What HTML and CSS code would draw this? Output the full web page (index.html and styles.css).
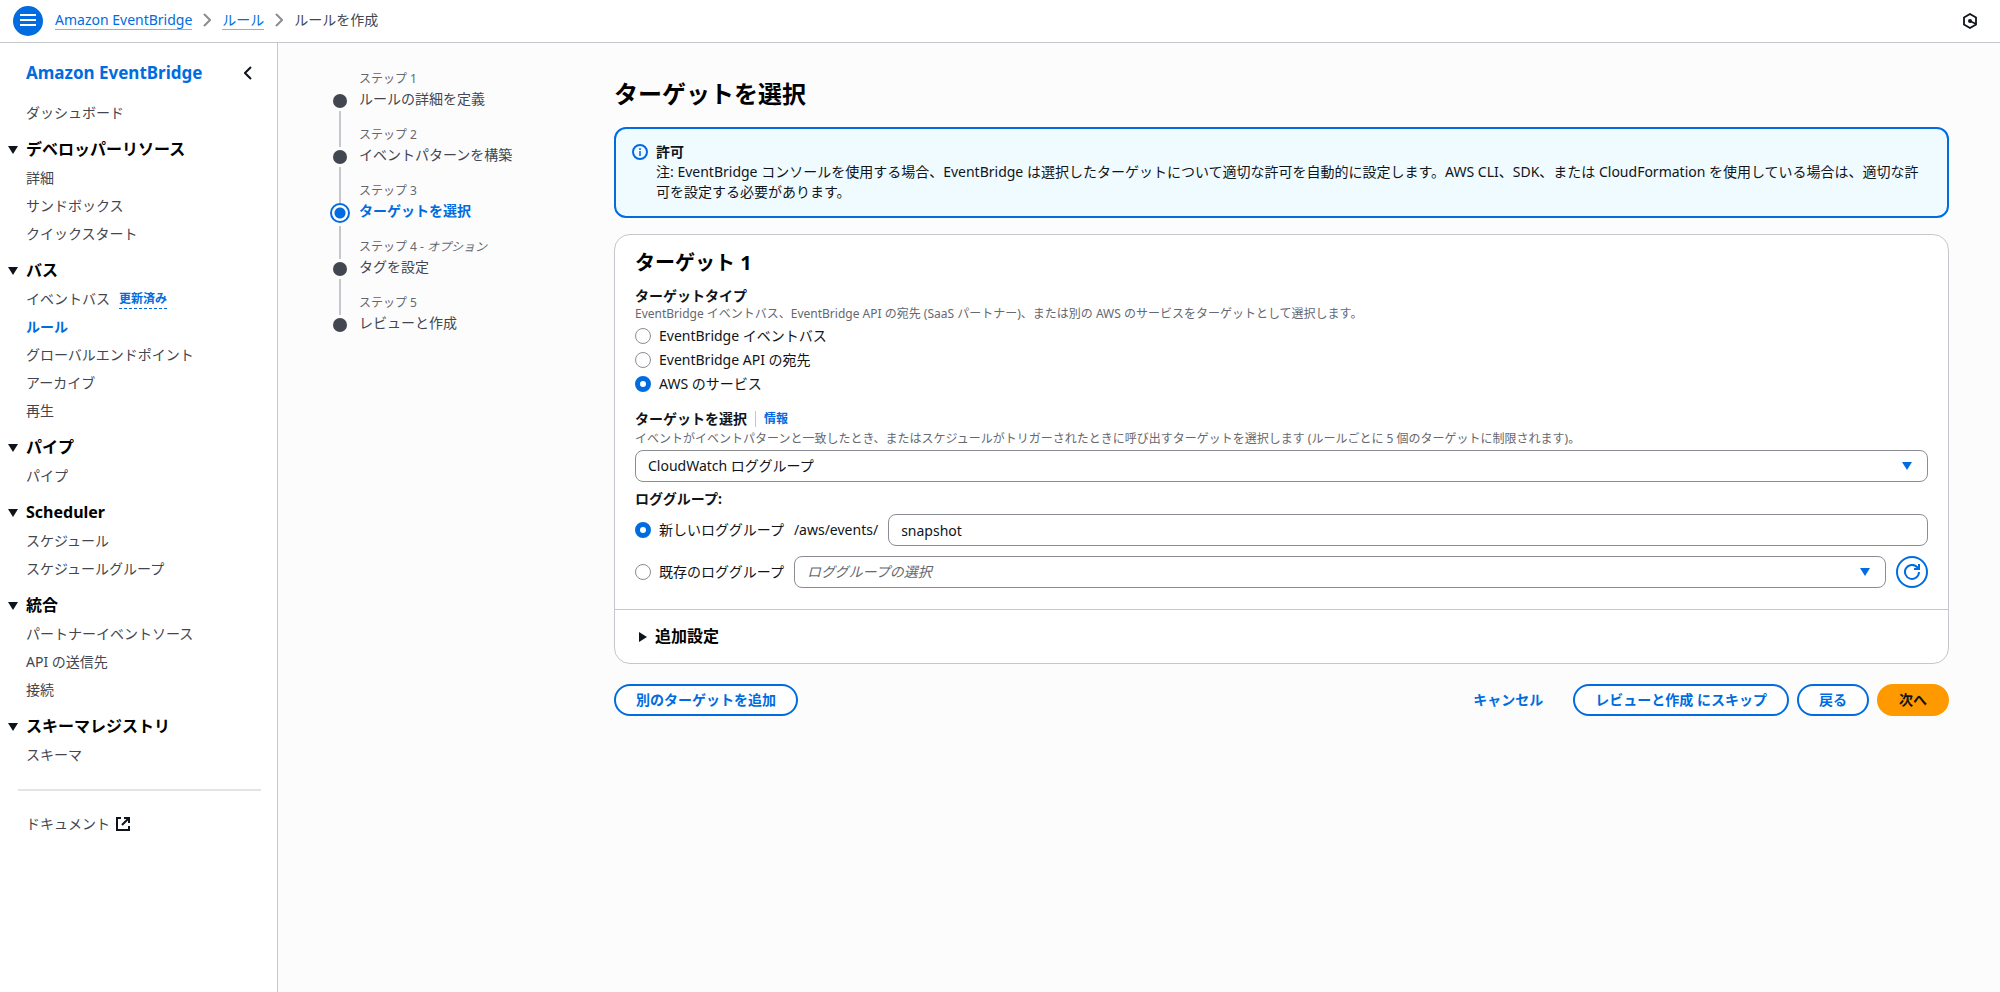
FILE: index.html
```
<!DOCTYPE html>
<html lang="ja">
<head>
    <meta charset="UTF-8">
    <meta name="viewport" content="width=device-width, initial-scale=1.0">
    <title>ルールを作成 | Amazon EventBridge</title>
    <link rel="stylesheet" href="styles.css">
</head>
<body>
    <header class="topbar">
        <button type="button" class="menu-btn" aria-label="メニュー">
            <svg width="16" height="16" viewBox="0 0 16 16" fill="none" stroke="currentColor" stroke-width="2"><path d="M0 2h16M0 7h16M0 12h16"/></svg>
        </button>
        <nav class="breadcrumb">
            <a href="#">Amazon EventBridge</a>
            <svg width="8" height="14" viewBox="0 0 8 14" fill="none" stroke="currentColor" stroke-width="2"><path d="M1 1l6 6-6 6"/></svg>
            <a href="#">ルール</a>
            <svg width="8" height="14" viewBox="0 0 8 14" fill="none" stroke="currentColor" stroke-width="2"><path d="M1 1l6 6-6 6"/></svg>
            <span>ルールを作成</span>
        </nav>
        <button type="button" class="hex-btn" aria-label="ツール">
            <svg width="16" height="16" viewBox="0 0 16 16" fill="none" stroke="currentColor"><path d="M8 1l6 3.500v7L8 15l-6-3.500v-7z" stroke-width="1.800"/><path d="M8 8l6 3" stroke-width="1.500"/><circle cx="8" cy="8" r="2" fill="currentColor" stroke="none"/></svg>
        </button>
    </header>

    <div class="layout">
        <aside class="sidebar">
            <div class="sidebar-head">
                <a href="#">Amazon EventBridge</a>
                <button type="button" class="close-btn" aria-label="閉じる">
                    <svg width="8" height="14" viewBox="0 0 8 14" fill="none" stroke="currentColor" stroke-width="2"><path d="M7 1L1 7l6 6"/></svg>
                </button>
            </div>
            <ul class="nav-list">
                <li><a href="#">ダッシュボード</a></li>
            </ul>
            <details class="nav-group" open>
                <summary>デベロッパーリソース</summary>
                <ul class="nav-list">
                    <li><a href="#">詳細</a></li>
                    <li><a href="#">サンドボックス</a></li>
                    <li><a href="#">クイックスタート</a></li>
                </ul>
            </details>
            <details class="nav-group" open>
                <summary>バス</summary>
                <ul class="nav-list">
                    <li><a href="#">イベントバス</a><button type="button" class="updated">更新済み</button></li>
                    <li><a href="#" class="active">ルール</a></li>
                    <li><a href="#">グローバルエンドポイント</a></li>
                    <li><a href="#">アーカイブ</a></li>
                    <li><a href="#">再生</a></li>
                </ul>
            </details>
            <details class="nav-group" open>
                <summary>パイプ</summary>
                <ul class="nav-list">
                    <li><a href="#">パイプ</a></li>
                </ul>
            </details>
            <details class="nav-group" open>
                <summary>Scheduler</summary>
                <ul class="nav-list">
                    <li><a href="#">スケジュール</a></li>
                    <li><a href="#">スケジュールグループ</a></li>
                </ul>
            </details>
            <details class="nav-group" open>
                <summary>統合</summary>
                <ul class="nav-list">
                    <li><a href="#">パートナーイベントソース</a></li>
                    <li><a href="#">API の送信先</a></li>
                    <li><a href="#">接続</a></li>
                </ul>
            </details>
            <details class="nav-group" open>
                <summary>スキーマレジストリ</summary>
                <ul class="nav-list">
                    <li><a href="#">スキーマ</a></li>
                </ul>
            </details>
            <hr>
            <ul class="nav-list">
                <li><a href="#" class="external">ドキュメント
                    <svg width="16" height="16" viewBox="0 0 16 16" fill="none" stroke="currentColor" stroke-width="2"><path d="M6 2H2v12h12v-4"/><path d="M9 2h5v5M14 2L7 9"/></svg>
                </a></li>
            </ul>
        </aside>

        <main class="content">
            <ol class="steps">
                <li>
                    <span class="step-num">ステップ 1</span>
                    <a href="#" class="step-title">ルールの詳細を定義</a>
                </li>
                <li>
                    <span class="step-num">ステップ 2</span>
                    <a href="#" class="step-title">イベントパターンを構築</a>
                </li>
                <li class="current">
                    <span class="step-num">ステップ 3</span>
                    <span class="step-title">ターゲットを選択</span>
                </li>
                <li>
                    <span class="step-num">ステップ 4 - <em>オプション</em></span>
                    <a href="#" class="step-title">タグを設定</a>
                </li>
                <li>
                    <span class="step-num">ステップ 5</span>
                    <a href="#" class="step-title">レビューと作成</a>
                </li>
            </ol>

            <form class="wizard">
                <h1>ターゲットを選択</h1>

                <div class="alert">
                    <svg width="16" height="16" viewBox="0 0 16 16" fill="none" stroke="currentColor" stroke-width="2"><circle cx="8" cy="8" r="7"/><path d="M8 7v5M8 4v2" stroke-width="1.500"/></svg>
                    <div>
                        <strong>許可</strong>
                        <p>注: EventBridge コンソールを使用する場合、EventBridge は選択したターゲットについて適切な許可を自動的に設定します。AWS CLI、SDK、または CloudFormation を使用している場合は、適切な許可を設定する必要があります。</p>
                    </div>
                </div>

                <section class="card">
                    <div class="card-body">
                        <h2>ターゲット 1</h2>

                        <fieldset class="target-type">
                            <legend>ターゲットタイプ</legend>
                            <p class="hint">EventBridge イベントバス、EventBridge API の宛先 (SaaS パートナー)、または別の AWS のサービスをターゲットとして選択します。</p>
                            <label class="radio"><input type="radio" name="type">EventBridge イベントバス</label>
                            <label class="radio"><input type="radio" name="type">EventBridge API の宛先</label>
                            <label class="radio"><input type="radio" name="type" checked>AWS のサービス</label>
                        </fieldset>

                        <div class="field">
                            <div class="field-label">
                                <label for="target">ターゲットを選択</label>
                                <a href="#" class="info">情報</a>
                            </div>
                            <p class="hint">イベントがイベントパターンと一致したとき、またはスケジュールがトリガーされたときに呼び出すターゲットを選択します (ルールごとに 5 個のターゲットに制限されます)。</p>
                            <div class="select">
                                <select id="target">
                                    <option>CloudWatch ロググループ</option>
                                </select>
                            </div>
                        </div>

                        <fieldset class="log-group">
                            <legend>ロググループ:</legend>
                            <div class="log-row">
                                <label class="radio"><input type="radio" name="log" checked>新しいロググループ</label>
                                <label for="logName">/aws/events/</label>
                                <input type="text" id="logName" value="snapshot">
                            </div>
                            <div class="log-row">
                                <label class="radio"><input type="radio" name="log">既存のロググループ</label>
                                <div class="select placeholder">
                                    <select aria-label="既存のロググループ">
                                        <option>ロググループの選択</option>
                                    </select>
                                </div>
                                <button type="button" class="refresh-btn" aria-label="更新">
                                    <svg width="16" height="16" viewBox="0 0 16 16" fill="none" stroke="currentColor" stroke-width="2"><path d="M15 8a7 7 0 1 1-2-5l2 2"/><path d="M15 0v5h-5"/></svg>
                                </button>
                            </div>
                        </fieldset>
                    </div>
                    <details class="extra">
                        <summary>追加設定</summary>
                    </details>
                </section>

                <div class="actions">
                    <button type="button" class="btn add-btn">別のターゲットを追加</button>
                    <button type="button" class="btn link-btn">キャンセル</button>
                    <button type="button" class="btn">レビューと作成 にスキップ</button>
                    <button type="button" class="btn">戻る</button>
                    <button type="submit" class="btn primary">次へ</button>
                </div>
            </form>
        </main>
    </div>
</body>
</html>
```
FILE: styles.css
```
*,
*::before,
*::after {
    box-sizing: border-box;
}
body {
    margin: 0;
    min-height: 100vh;
    display: flex;
    flex-direction: column;
    font-family: "Noto Sans", "Noto Sans CJK JP", sans-serif;
    font-size: 14px;
    line-height: 20px;
    color: #0f141a;
    background-color: #fcfcfd;
}
a {
    color: inherit;
    text-decoration: none;
}
button,
input,
select {
    font: inherit;
    color: inherit;
}
button {
    padding: 0;
    border: none;
    background: none;
    cursor: pointer;
}
svg {
    display: block;
    flex: none;
}
h1, h2, p, ul, ol {
    margin: 0;
    padding: 0;
}
ul, ol {
    list-style: none;
}
fieldset {
    margin: 0;
    padding: 0;
    border: none;
    min-width: 0;
}

/* header */
.topbar {
    display: flex;
    align-items: center;
    height: 43px;
    padding: 0 22px 0 13px;
    background-color: #fff;
    border-bottom: 1px solid #c6c6cd;
}
.menu-btn {
    display: flex;
    align-items: center;
    justify-content: center;
    width: 30px;
    height: 30px;
    border-radius: 50%;
    background-color: #006ce0;
    color: #fff;
}
.breadcrumb {
    display: flex;
    align-items: center;
    gap: 11px;
    flex: 1;
    margin-left: 12px;
    padding-bottom: 2px;
    color: #424650;
}
.breadcrumb a {
    color: #006ce0;
    border-bottom: 1px solid #7fb2f0;
    line-height: 18px;
}
.breadcrumb svg {
    color: #8c8c94;
}

/* sidebar */
.layout {
    display: flex;
    flex: 1;
}
.sidebar {
    flex: none;
    width: 278px;
    padding-top: 18px;
    background-color: #fff;
    border-right: 1px solid #c6c6cd;
}
.sidebar-head {
    display: flex;
    justify-content: space-between;
    align-items: center;
    padding: 0 25px 0 26px;
    margin-bottom: 14px;
    font-size: 17px;
    line-height: 24px;
    font-weight: bold;
    color: #006ce0;
}
.close-btn {
    color: #0f141a;
}
.nav-list li {
    display: flex;
    align-items: center;
    gap: 9px;
    padding: 4px 26px;
    color: #424650;
}
.nav-list .active {
    color: #006ce0;
    font-weight: bold;
}
.updated {
    font-size: 12px;
    line-height: 18px;
    font-weight: bold;
    color: #006ce0;
    border-bottom: 1px dashed #006ce0;
}
.nav-group summary {
    display: flex;
    align-items: center;
    gap: 8px;
    padding: 12px 8px 4px;
    font-size: 16px;
    line-height: 21px;
    font-weight: bold;
    color: #000;
    cursor: pointer;
}
.nav-group summary::before {
    content: "";
    border: 5px solid transparent;
    border-top: 8px solid #0f141a;
    border-bottom: none;
}
.sidebar hr {
    margin: 20px 16px 19px 18px;
    border: none;
    border-top: 2px solid #e3e3e8;
}
.external {
    display: flex;
    align-items: center;
    gap: 5px;
}
.external svg {
    color: #0f141a;
}

/* wizard steps */
.content {
    display: flex;
    flex: 1;
    min-width: 0;
    padding: 26px 51px 40px 52px;
}
.steps {
    flex: none;
    width: 284px;
}
.steps li {
    position: relative;
    height: 56px;
    padding-left: 29px;
    color: #424650;
}
.step-num {
    display: block;
    font-size: 12px;
    line-height: 20px;
    color: #656871;
}
.step-title {
    display: block;
}
.steps li::before {
    content: "";
    position: absolute;
    left: 3px;
    top: 25px;
    width: 14px;
    height: 14px;
    border-radius: 50%;
    background-color: #424650;
}
/* line to the next step */
.steps li::after {
    content: "";
    position: absolute;
    left: 9px;
    top: 42px;
    width: 2px;
    height: 36px;
    background-color: #c6c6cd;
}
.steps li:last-child::after {
    display: none;
}
.steps .current .step-title {
    color: #006ce0;
    font-weight: bold;
}
.steps .current::before {
    left: 0;
    top: 22px;
    width: 20px;
    height: 20px;
    border: 2px solid #006ce0;
    background: radial-gradient(circle, #006ce0 5px, #fff 6px);
}
.steps .current::after {
    top: 45px;
    height: 33px;
}

/* form */
.wizard {
    flex: 1;
    min-width: 0;
}
h1 {
    font-size: 24px;
    line-height: 30px;
    margin: 10px 0 18px;
    color: #000;
}
.alert {
    display: flex;
    gap: 8px;
    padding: 13px 20px 14px 16px;
    border: 2px solid #006ce0;
    border-radius: 12px;
    background-color: #f0fbff;
}
.alert svg {
    margin-top: 2px;
    color: #006ce0;
}
.alert strong {
    display: block;
}
.card {
    margin-top: 16px;
    border: 1px solid #c6c6cd;
    border-radius: 16px;
    background-color: #fff;
}
.card-body {
    padding: 15px 20px 21px;
}
h2 {
    font-size: 20px;
    line-height: 26px;
    margin-bottom: 10px;
    color: #000;
}
legend,
.field-label label {
    padding: 0;
    font-weight: bold;
}
.hint {
    font-size: 12px;
    line-height: 16px;
    color: #656871;
}
.radio {
    display: flex;
    align-items: center;
    gap: 8px;
}
input[type="radio"] {
    appearance: none;
    flex: none;
    width: 16px;
    height: 16px;
    margin: 0;
    border: 1px solid #8c8c94;
    border-radius: 50%;
    background-color: #fff;
}
input[type="radio"]:checked {
    border: 5px solid #006ce0;
}
.target-type .radio {
    margin-top: 4px;
}
.field {
    margin: 15px 0 7px;
}
.field-label {
    display: flex;
    align-items: center;
    margin-bottom: 2px;
}
.info {
    margin-left: 8px;
    padding-left: 8px;
    border-left: 1px solid #c6c6cd;
    font-size: 12px;
    line-height: 16px;
    font-weight: bold;
    color: #006ce0;
}
.select {
    position: relative;
    flex: 1;
}
.field .select {
    margin-top: 3px;
}
.select select,
input[type="text"] {
    appearance: none;
    display: block;
    width: 100%;
    height: 32px;
    padding: 0 12px;
    border: 1px solid #8c8c94;
    border-radius: 8px;
    background-color: #fff;
}
.select::after {
    content: "";
    position: absolute;
    right: 16px;
    top: 12px;
    border: 5px solid transparent;
    border-top: 8px solid #006ce0;
    border-bottom: none;
    pointer-events: none;
}
.placeholder select {
    font-style: italic;
    color: #656871;
}
.log-row {
    display: flex;
    align-items: center;
    gap: 10px;
    margin-top: 5px;
}
.log-row + .log-row {
    margin-top: 10px;
}
.log-row input[type="text"] {
    flex: 1;
    min-width: 0;
}
.refresh-btn {
    display: flex;
    align-items: center;
    justify-content: center;
    width: 32px;
    height: 32px;
    border: 2px solid #006ce0;
    border-radius: 50%;
    color: #006ce0;
}
.extra {
    border-top: 1px solid #c6c6cd;
}
.extra summary {
    display: flex;
    align-items: center;
    gap: 8px;
    padding: 16px 24px;
    font-size: 16px;
    line-height: 21px;
    font-weight: bold;
    color: #000;
    cursor: pointer;
}
.extra summary::before {
    content: "";
    border: 5px solid transparent;
    border-left: 8px solid #0f141a;
    border-right: none;
}

/* buttons under the card */
.actions {
    display: flex;
    gap: 8px;
    margin-top: 20px;
}
.btn {
    height: 32px;
    padding: 0 20px;
    border: 2px solid #006ce0;
    border-radius: 16px;
    background-color: #fff;
    font-weight: bold;
    line-height: 26px;
    color: #006ce0;
}
.add-btn {
    margin-right: auto;
}
.link-btn {
    border-color: transparent;
    background: none;
}
.primary {
    border-color: #f90;
    background-color: #f90;
    color: #0f141a;
}
```
